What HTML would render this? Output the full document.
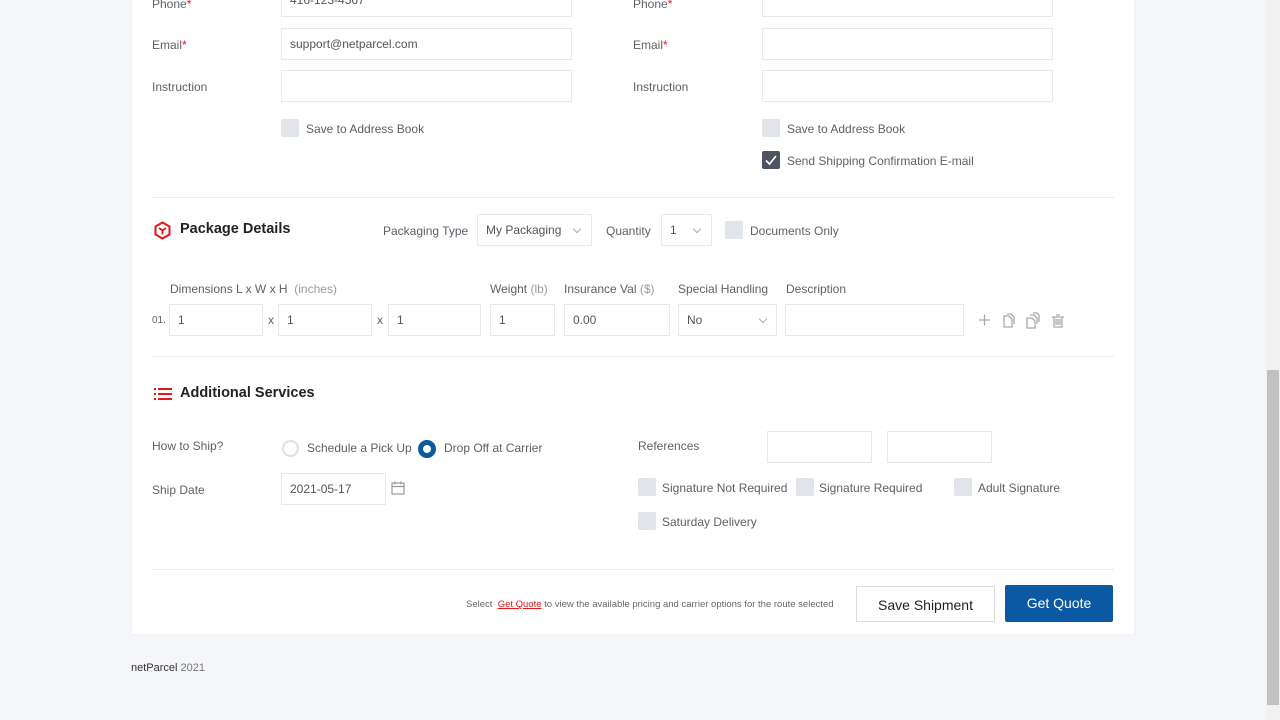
<!DOCTYPE html>
<html><head><meta charset="utf-8"><style>
*{box-sizing:border-box;margin:0;padding:0}
body{width:1280px;height:720px;background:#f5f6f9;font-family:"Liberation Sans",sans-serif;font-size:12px;color:#5d6168;position:relative;overflow:hidden}
.card{position:absolute;left:131px;top:-10px;width:1004px;height:645px;background:#fff;border:1px solid #eef0f3}
.a{position:absolute;white-space:nowrap;line-height:16px}
.in{position:absolute;border:1px solid #e7e9ec;background:#fff;height:32px;padding-left:8px;line-height:31px;color:#555}
.cb{position:absolute;width:18px;height:18px;background:#e1e5ea;border-radius:2px}
.hr{position:absolute;left:152px;width:962px;height:1px;background:#e9ebee}
.r{color:#e3161b}
.h{font-weight:bold;font-size:14.5px;color:#222}
.chev{position:absolute;width:6px;height:6px;border-right:1px solid #aaa;border-bottom:1px solid #aaa;transform:rotate(45deg)}
.sb{position:absolute;left:1266px;top:0;width:14px;height:720px;background:#f1f1f1}
.th{position:absolute;left:1267px;top:370px;width:12px;height:335px;background:#c1c1c1}
</style></head><body>
<div class="card"></div>
<div class="a" style="left:152px;top:-4px">Phone<span class="r">*</span></div>
<div class="in" style="left:281px;top:-14px;width:291px;height:31px;line-height:26px">416-123-4567</div>
<div class="a" style="left:633px;top:-4px">Phone<span class="r">*</span></div>
<div class="in" style="left:762px;top:-14px;width:291px;height:31px"></div>
<div class="a" style="left:152px;top:37px">Email<span class="r">*</span></div>
<div class="in" style="left:281px;top:28px;width:291px">support@netparcel.com</div>
<div class="a" style="left:633px;top:37px">Email<span class="r">*</span></div>
<div class="in" style="left:762px;top:28px;width:291px"></div>
<div class="a" style="left:152px;top:79px">Instruction</div>
<div class="in" style="left:281px;top:70px;width:291px"></div>
<div class="a" style="left:633px;top:79px">Instruction</div>
<div class="in" style="left:762px;top:70px;width:291px"></div>
<div class="cb" style="left:281px;top:119px"></div><div class="a" style="left:306px;top:121px">Save to Address Book</div>
<div class="cb" style="left:762px;top:119px"></div><div class="a" style="left:787px;top:121px">Save to Address Book</div>
<div class="cb" style="left:762px;top:151px;background:#4e5460"><svg width="18" height="18"><path d="M4 9.5l3.5 3.5L14 5" stroke="#fff" stroke-width="1.6" fill="none"/></svg></div>
<div class="a" style="left:787px;top:153px">Send Shipping Confirmation E-mail</div>
<div class="hr" style="top:197px"></div>

<svg class="a" style="left:153px;top:221px" width="19" height="19" viewBox="0 0 19 19"><path d="M9.5 1.5l7 4v8l-7 4-7-4v-8z" stroke="#e3161b" stroke-width="2" fill="none"/><path d="M6 7l3.5 2.5L13 7M9.5 9.5v4" stroke="#e3161b" stroke-width="1.8" fill="none"/></svg>
<div class="a h" style="left:180px;top:221px">Package Details</div>
<div class="a" style="left:383px;top:223px">Packaging Type</div>
<div class="in" style="left:477px;top:214px;width:115px">My Packaging</div><div class="chev" style="left:574px;top:226px"></div>
<div class="a" style="left:606px;top:223px">Quantity</div>
<div class="in" style="left:661px;top:214px;width:51px">1</div><div class="chev" style="left:694px;top:226px"></div>
<div class="cb" style="left:725px;top:221px"></div><div class="a" style="left:750px;top:223px">Documents Only</div>

<div class="a" style="left:170px;top:281px">Dimensions L x W x H <span style="color:#999">&nbsp;(inches)</span></div>
<div class="a" style="left:490px;top:281px">Weight <span style="color:#999">(lb)</span></div>
<div class="a" style="left:564px;top:281px">Insurance Val <span style="color:#999">($)</span></div>
<div class="a" style="left:678px;top:281px">Special Handling</div>
<div class="a" style="left:786px;top:281px">Description</div>
<div class="a" style="left:152px;top:313px;font-size:10px">01.</div>
<div class="in" style="left:169px;top:304px;width:94px">1</div>
<div class="a" style="left:268px;top:312px">x</div>
<div class="in" style="left:278px;top:304px;width:94px">1</div>
<div class="a" style="left:377px;top:312px">x</div>
<div class="in" style="left:388px;top:304px;width:93px">1</div>
<div class="in" style="left:490px;top:304px;width:65px">1</div>
<div class="in" style="left:564px;top:304px;width:106px">0.00</div>
<div class="in" style="left:678px;top:304px;width:99px">No</div><div class="chev" style="left:760px;top:316px"></div>
<div class="in" style="left:785px;top:304px;width:179px"></div>
<svg class="a" style="left:976px;top:311px" width="96" height="18" viewBox="0 0 96 18" fill="none" stroke="#aaa" stroke-width="1.3"><path d="M3 9h11M8.5 3.5v11"/><path d="M28 5h5l3 3v8h-8zM31 3h4l3 3v7"/><path d="M51 7h5l3 3v7h-8zM54 4h4l3 3v6M57 2h4l2 2v7"/><path d="M76 6h12M78 6v10h8V6M80 4h4M80 8v6M82 8v6M84 8v6"/></svg>
<div class="hr" style="top:356px"></div>

<svg class="a" style="left:154px;top:388px" width="18" height="13" viewBox="0 0 18 13"><g fill="#e3161b"><rect x="0" y="0" width="2" height="2"/><rect x="4" y="0" width="14" height="2"/><rect x="0" y="5" width="2" height="2"/><rect x="4" y="5" width="14" height="2"/><rect x="0" y="10" width="2" height="2"/><rect x="4" y="10" width="14" height="2"/></g></svg>
<div class="a h" style="left:180px;top:385px">Additional Services</div>
<div class="a" style="left:152px;top:438px">How to Ship?</div>
<div class="a" style="left:282px;top:440px;width:17px;height:17px;border:2.5px solid #dde0e4;border-radius:50%"></div>
<div class="a" style="left:307px;top:440px">Schedule a Pick Up</div>
<div class="a" style="left:418px;top:440px;width:18px;height:18px;border:5px solid #0b5a9e;border-radius:50%;background:#fff"></div>
<div class="a" style="left:444px;top:440px">Drop Off at Carrier</div>
<div class="a" style="left:152px;top:482px">Ship Date</div>
<div class="in" style="left:281px;top:473px;width:105px">2021-05-17</div>
<svg class="a" style="left:391px;top:481px" width="14" height="14" viewBox="0 0 14 14" fill="none" stroke="#999" stroke-width="1.2"><rect x="1" y="2" width="12" height="11"/><path d="M1 5.5h12M4 0.5v3M10 0.5v3"/></svg>
<div class="a" style="left:638px;top:438px">References</div>
<div class="in" style="left:767px;top:431px;width:105px"></div>
<div class="in" style="left:887px;top:431px;width:105px"></div>
<div class="cb" style="left:638px;top:478px"></div><div class="a" style="left:662px;top:480px">Signature Not Required</div>
<div class="cb" style="left:796px;top:478px"></div><div class="a" style="left:819px;top:480px">Signature Required</div>
<div class="cb" style="left:954px;top:478px"></div><div class="a" style="left:978px;top:480px">Adult Signature</div>
<div class="cb" style="left:638px;top:512px"></div><div class="a" style="left:662px;top:514px">Saturday Delivery</div>
<div class="hr" style="top:569px"></div>

<div class="a" style="left:466px;top:597px;font-size:9.5px;color:#666">Select &nbsp;<span style="color:#e3161b;text-decoration:underline">Get Quote</span> to view the available pricing and carrier options for the route selected</div>
<div class="a" style="left:856px;top:586px;width:139px;height:36px;border:1px solid #d9dde3;background:#fff;color:#222;font-size:14px;text-align:center;line-height:36px">Save Shipment</div>
<div class="a" style="left:1005px;top:585px;width:108px;height:37px;background:#0b59a3;color:#fff;font-size:14px;text-align:center;line-height:36px;border-radius:2px">Get Quote</div>
<div class="a" style="left:131px;top:660px;font-size:11px;color:#333">netParcel <span style="color:#777">2021</span></div>
<div class="sb"></div><div class="th"></div>
</body></html>
